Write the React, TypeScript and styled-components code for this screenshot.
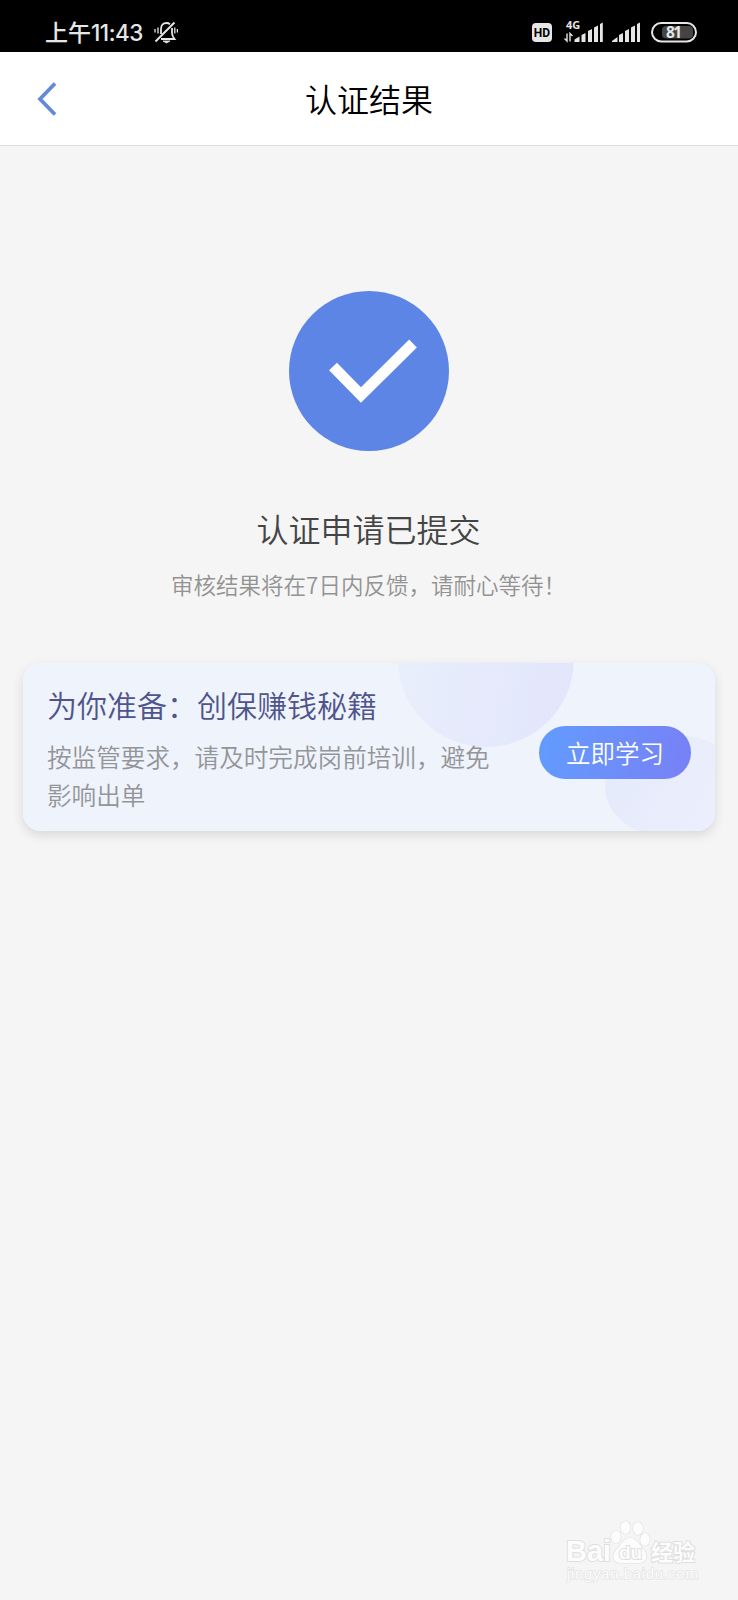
import React from "react";
import styled, { createGlobalStyle } from "styled-components";

const GlobalStyle = createGlobalStyle`
  * { box-sizing: border-box; }
  body {
    margin: 0;
    background: #f5f5f5;
    font-family: "Noto Sans CJK SC", sans-serif;
  }
`;

const Screen = styled.div`
  display: flex;
  flex-direction: column;
  min-height: 1600px;
  background: #f5f5f5;
`;

const StatusBar = styled.div`
  display: flex;
  justify-content: space-between;
  height: 52px;
  padding: 13px 40px 0 45px;
  background: #000;
  color: #e6e6e6;
`;

const StatusGroup = styled.div<{ $gap: number }>`
  display: flex;
  align-items: center;
  gap: ${(p) => p.$gap}px;
  height: 38px;
`;

const Clock = styled.span`
  display: flex;
  align-items: baseline;
  width: 98px;
  font-size: 23px;
  font-weight: 500;
  line-height: 38px;
  white-space: nowrap;
`;

const ClockDigits = styled.span`
  font-family: Inter, sans-serif;
  font-size: 22.5px;
  font-weight: 500;
  letter-spacing: -0.5px;
`;

const NavBar = styled.header`
  display: grid;
  grid-template-columns: 100px 1fr 100px;
  align-items: center;
  height: 94px;
  background: #fff;
  border-bottom: 1px solid #dedede;
`;

const BackButton = styled.button`
  display: flex;
  padding: 0 0 0 36px;
  border: 0;
  background: none;
`;

const NavTitle = styled.h1`
  margin: 0;
  padding-bottom: 1px;
  text-align: center;
  font-size: 32px;
  font-weight: 350;
  line-height: 48px;
  color: #000;
`;

const Result = styled.main`
  display: flex;
  flex-direction: column;
  align-items: center;
  padding-top: 145px;
`;

const ResultTitle = styled.h2`
  margin: 53px 1px 0 0;
  font-size: 32px;
  font-weight: 350;
  line-height: 48px;
  color: #444;
`;

const ResultNote = styled.p`
  margin: 15px 1px 0 0;
  font-size: 22.5px;
  font-weight: 350;
  line-height: 34px;
  color: #929292;
`;

const CardShadow = styled.div`
  margin-top: 62px;
  border-radius: 18px;
  box-shadow: 0 4px 12px rgba(0, 0, 0, 0.12);
`;

const Card = styled.section`
  position: relative;
  display: flex;
  align-items: center;
  justify-content: space-between;
  width: 692px;
  height: 168px;
  padding: 0 24px;
  border-radius: 18px;
  overflow: hidden;
  background: #eef3fc;
`;

const Bubble = styled.span<{ $x: number; $y: number; $w: number; $h: number }>`
  position: absolute;
  left: ${(p) => p.$x}px;
  top: ${(p) => p.$y}px;
  width: ${(p) => p.$w}px;
  height: ${(p) => p.$h}px;
  border-radius: 50%;
  background: linear-gradient(100deg, #e9effc, #e2e5fb);
`;

const SoftBubble = styled(Bubble)`
  background: linear-gradient(120deg, #e4eafb 10%, #ebeefc 70%);
`;

const CardText = styled.div`
  position: relative;
  width: 450px;
  padding-top: 1px;
`;

const CardTitle = styled.h3`
  margin: 0 0 11px;
  font-size: 30px;
  font-weight: 350;
  line-height: 43px;
  color: #4f558a;
`;

const CardDesc = styled.p`
  margin: 0;
  font-size: 24.6px;
  font-weight: 350;
  line-height: 38px;
  color: #949598;
`;

const StudyButton = styled.button`
  position: relative;
  width: 152px;
  height: 53px;
  margin-top: 11px;
  padding: 0;
  border: 0;
  border-radius: 27px;
  background: linear-gradient(100deg, #629cfd, #7880f6);
  color: #fff;
  font: 350 24.5px/52px "Noto Sans CJK SC", sans-serif;
`;

const Watermark = styled.footer`
  display: flex;
  justify-content: flex-end;
  margin-top: auto;
  padding: 0 38px 14px 0;
`;

function MutedBell() {
  return (
    <svg width="24" height="24" viewBox="0 0 24 24" fill="none" stroke="#e6e6e6" strokeWidth="1.8">
      <path d="M7 14V9c0-3.500 2-6 5.500-6 1.500 0 2.500.4 3.500 1.200M18 8v5c0 2.500 1 4 2.500 6H7" />
      <path d="M1.500 21.500 20.500 2.500" strokeWidth="2" />
      <path d="M9 21h7l-3.500 2Z" fill="#e6e6e6" strokeWidth=".8" />
      <path d="M4 7.500v6M1 9v3.500M20.800 7.500v6M23.400 9v3.500" strokeWidth="1.300" />
    </svg>
  );
}

function SignalIcons() {
  return (
    <svg width="166" height="38" viewBox="0 -6 166 38" fill="#e6e6e6">
      <rect x="0" y="4" width="20" height="19" rx="4" />
      <text x="10" y="18" textAnchor="middle" fill="#000" fontFamily="Roboto" fontWeight="700" fontSize="12">HD</text>
      <text x="34" y="10" fontFamily="Open Sans" fontWeight="700" fontSize="11">4G</text>
      <path d="M35 14.500v7.500l-2.500-2.500M38 22.500v-8l2.500 2.500" fill="none" stroke="#e6e6e6" strokeWidth="1.400" />
      <path d="M42.500 23v-2.500l5-3V23zM49.500 23v-7l4-2V23zM56 23V12l4-2V23zM62 23V8.500l4-2V23zM68 23V5l2.800-1.500V23z" />
      <path d="M80 23v-1l5.500-4v5zM87 23v-7l4-2v9zM93 23V12l4-2V23zM99 23V8.500l4-2V23zM105 23V5l3-1.500V23z" />
      <rect x="120" y="4" width="44" height="18.500" rx="9.250" fill="none" stroke="#e6e6e6" strokeWidth="2" />
      <rect x="130" y="7" width="31" height="12.500" rx="4" fill="#444" />
      <text x="142" y="19" textAnchor="middle" fontFamily="Open Sans" fontWeight="700" fontSize="15.500" textLength="16">81</text>
    </svg>
  );
}

function BaiduMark() {
  return (
    <svg width="134" height="66" viewBox="0 0 134 66" fill="#fcfcfc" stroke="#dfdfdf" strokeWidth="1.200" paintOrder="stroke">
      <ellipse cx="50" cy="17" rx="4.800" ry="6.500" />
      <ellipse cx="59.500" cy="7.500" rx="5" ry="6.500" />
      <ellipse cx="72" cy="8.500" rx="5" ry="6.500" />
      <ellipse cx="79" cy="19.500" rx="4.800" ry="6.500" />
      <path d="M64 18c7 0 9 7 14 12 5 6 2 13-5 13H55c-8 0-10-7-5-13 5-5 7-12 14-12Z" />
      <g strokeWidth="2">
        <text x="0" y="41" fontFamily="Liberation Sans" fontWeight="700" fontSize="29" textLength="45" lengthAdjust="spacingAndGlyphs">Bai</text>
        <text x="53" y="39" fontFamily="Liberation Sans" fontWeight="700" fontSize="19">du</text>
        <text x="85" y="40" fontFamily="Noto Sans CJK SC" fontWeight="700" fontSize="22">经验</text>
        <text x="1" y="59" fontFamily="Liberation Sans" fontSize="15" stroke="#e4e4e4" strokeWidth="1.400" textLength="131">jingyan.baidu.com</text>
      </g>
    </svg>
  );
}

export default function App() {
  return (
    <Screen>
      <GlobalStyle />
      <StatusBar>
        <StatusGroup $gap={11}>
          <Clock>
            上午<ClockDigits>11:43</ClockDigits>
          </Clock>
          <MutedBell />
        </StatusGroup>
        <StatusGroup $gap={0}>
          <SignalIcons />
        </StatusGroup>
      </StatusBar>
      <NavBar>
        <BackButton aria-label="返回">
          <svg width="22" height="36" viewBox="0 0 22 36" fill="none" stroke="#6389db" strokeWidth="3.800">
            <path d="M19 2.500 4 18l15 15.500" />
          </svg>
        </BackButton>
        <NavTitle>认证结果</NavTitle>
      </NavBar>
      <Result>
        <svg width="160" height="160" viewBox="0 0 160 160">
          <circle cx="80" cy="80" r="80" fill="#5c85e6" />
          <path d="M44 75.500 72 104 124 52.500" fill="none" stroke="#fff" strokeWidth="11" />
        </svg>
        <ResultTitle>认证申请已提交</ResultTitle>
        <ResultNote>审核结果将在7日内反馈，请耐心等待！</ResultNote>
        <CardShadow>
          <Card>
            <Bubble $x={375} $y={-92} $w={176} $h={176} />
            <SoftBubble $x={582} $y={72} $w={140} $h={104} />
            <CardText>
              <CardTitle>为你准备：创保赚钱秘籍</CardTitle>
              <CardDesc>按监管要求，请及时完成岗前培训，避免影响出单</CardDesc>
            </CardText>
            <StudyButton>立即学习</StudyButton>
          </Card>
        </CardShadow>
      </Result>
      <Watermark>
        <BaiduMark />
      </Watermark>
    </Screen>
  );
}
